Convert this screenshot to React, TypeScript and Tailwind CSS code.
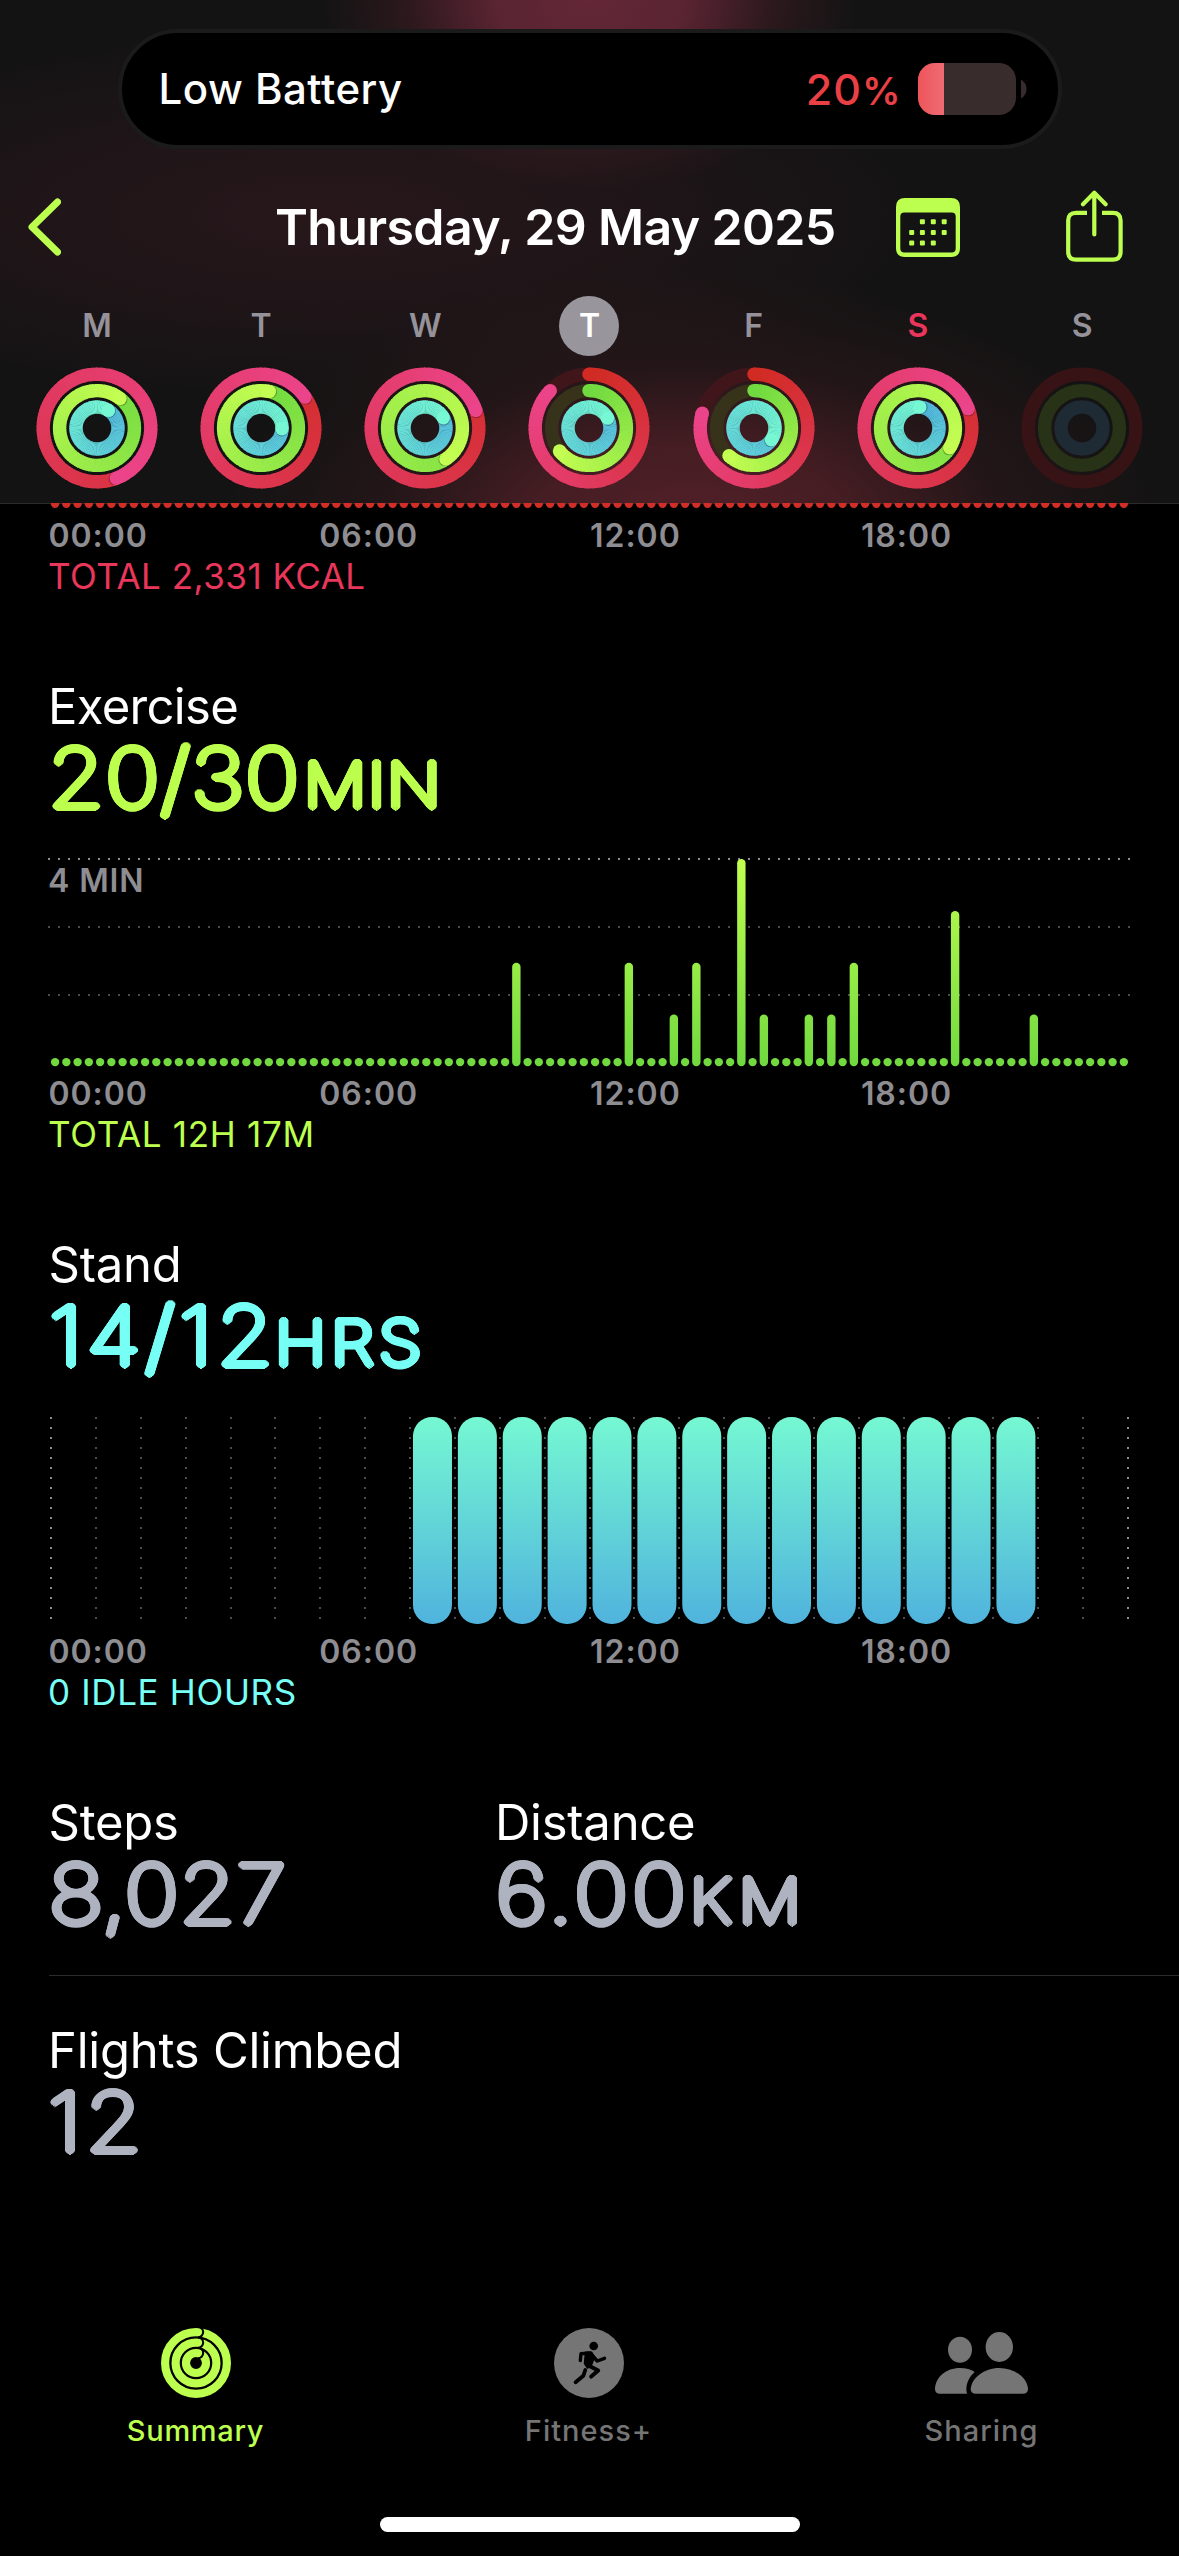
import React from 'react';

type RingData = { move: number; exercise: number; stand: number };
type Day = { letter: string; tone: 'normal' | 'selected' | 'today'; rings: RingData | null };

// Sweep of each ring in degrees, clockwise from the top; above 360 the ring overlaps itself.
const week: Day[] = [
  { letter: 'M', tone: 'normal', rings: { move: 519, exercise: 398, stand: 393 } },
  { letter: 'T', tone: 'normal', rings: { move: 415, exercise: 373, stand: 452 } },
  { letter: 'W', tone: 'normal', rings: { move: 431, exercise: 506, stand: 421 } },
  { letter: 'T', tone: 'selected', rings: { move: 314, exercise: 232, stand: 422 } },
  { letter: 'F', tone: 'normal', rings: { move: 286, exercise: 222, stand: 484 } },
  { letter: 'S', tone: 'today', rings: { move: 429, exercise: 482, stand: 365 } },
  { letter: 'S', tone: 'normal', rings: null },
];

const polar = (r: number, deg: number) => {
  const a = ((deg - 90) * Math.PI) / 180;
  return [r * Math.cos(a), r * Math.sin(a)];
};

const mix = (from: number[], to: number[], t: number) =>
  `rgb(${from.map((v, i) => Math.round(v + (to[i] - v) * t)).join(',')})`;

function Ring({ r, sweep, from, to, track }: { r: number; sweep: number; from: number[]; to: number[]; track: string }) {
  const step = 4;
  const first = Math.max(0, sweep - 360);
  const segments: React.ReactNode[] = [];
  for (let a = first; a < sweep; a += step) {
    const end = Math.min(sweep, a + step + 1);
    const [x1, y1] = polar(r, a);
    const [x2, y2] = polar(r, end);
    segments.push(
      <path key={a} d={`M${x1} ${y1}A${r} ${r} 0 0 1 ${x2} ${y2}`} stroke={mix(from, to, a / sweep)} strokeWidth="13.4" fill="none" />,
    );
  }
  const [tx, ty] = polar(r, sweep);
  const [sx, sy] = polar(r, sweep + 75 / r);
  return (
    <g>
      {sweep < 360 && <circle r={r} stroke={track} strokeWidth="13.4" fill="none" />}
      {sweep < 360 && <circle cx={0} cy={-r} r="6.7" fill={mix(from, to, 0)} />}
      {segments}
      {sweep > 360 && <circle cx={sx} cy={sy} r="6.4" fill="#000" opacity="0.3" />}
      <circle cx={tx} cy={ty} r="6.7" fill={mix(from, to, 1)} />
    </g>
  );
}

function ActivityRings({ rings }: { rings: RingData | null }) {
  return (
    <svg className="mt-[11px] h-[122px] w-[122px]" viewBox="-61 -61 122 122">
      {rings ? (
        <g>
          <Ring r={53.8} sweep={rings.move} from={[209, 43, 36]} to={[236, 68, 139]} track="#40161a" />
          <Ring r={37.4} sweep={rings.exercise} from={[112, 218, 64]} to={[197, 254, 82]} track="#36331a" />
          <Ring r={21} sweep={rings.stand} from={[79, 179, 221]} to={[117, 248, 211]} track="#1e2b35" />
        </g>
      ) : (
        <g fill="none" strokeWidth="13.4">
          <circle r="53.8" stroke="#381316" />
          <circle r="37.4" stroke="#273217" />
          <circle r="21" stroke="#1e2b34" />
        </g>
      )}
    </svg>
  );
}

function DynamicIsland() {
  return (
    <div className="mx-auto mt-[29px] flex h-[120px] w-[944px] items-center rounded-full border-4 border-[#1c1b1c] bg-black pr-[31px] pl-[37px]">
      <span className="text-[42px] leading-none font-medium tracking-[0.5px] text-white">Low Battery</span>
      <span className="ml-auto text-[43px] leading-none font-medium tracking-[1.2px] text-[#ea4045]">
        20<span className="text-[38px] font-semibold tracking-normal">%</span>
      </span>
      <span className="ml-[17px] flex h-[52px] w-[98px] overflow-hidden rounded-[17px] bg-[#382c2c]">
        <span className="h-full w-[26px] bg-linear-to-r from-[#ed5459] to-[#ef6b74]" />
      </span>
      <svg className="ml-1 h-[20px] w-[7px]" viewBox="0 0 7 20">
        <path d="M1 0.5Q6.5 4 6.5 10T1 19.5Z" fill="#382c2c" />
      </svg>
    </div>
  );
}

function TitleBar() {
  return (
    <div className="mt-[30px] flex h-[96px] items-center text-[#bcff4e]">
      <svg className="ml-[28px] h-[58px] w-[33px]" viewBox="0 0 33 58" fill="none" stroke="currentColor" strokeWidth="7" strokeLinecap="round" strokeLinejoin="round">
        <path d="M29.500 4L4 29L29.500 54" />
      </svg>
      <h1 className="ml-[214px] w-[621px] text-[50px] leading-[60px] font-semibold tracking-[-0.64px] whitespace-nowrap text-white">
        Thursday, 29 May 2025
      </h1>
      <svg className="h-[59px] w-[64px]" viewBox="0 0 64 59" fill="currentColor">
        <path fillRule="evenodd" d="M9 0H55Q64 0 64 9V50Q64 59 55 59H9Q0 59 0 50V9Q0 0 9 0ZM8.300 14.500Q4.300 14.500 4.300 18.500V50.500Q4.300 54.500 8.300 54.500H55.700Q59.700 54.500 59.700 50.500V18.500Q59.700 14.500 55.700 14.500Z" />
        {[[26.4, 23.7], [37.3, 23.7], [48.2, 23.7], [15.7, 34.4], [26.4, 34.4], [37.3, 34.4], [48.2, 34.4], [15.7, 45], [26.4, 45], [37.3, 45]].map(([x, y]) => (
          <rect key={`${x}-${y}`} x={x - 2.5} y={y - 2.5} width="5" height="5" rx="1" />
        ))}
      </svg>
      <svg className="mb-[3px] ml-[106px] h-[72px] w-[57px]" viewBox="0 0 57 72" fill="none" stroke="currentColor" strokeWidth="4.2">
        <path d="M21 22.800H10Q2.200 22.800 2.200 30.600V61.800Q2.200 69.600 10 69.600H46.800Q54.600 69.600 54.600 61.800V30.600Q54.600 22.800 46.800 22.800H36" />
        <path d="M28.300 3V44.500M17 14.200L28.300 2.800L39.600 14.200" strokeLinecap="round" strokeLinejoin="round" />
      </svg>
    </div>
  );
}

function WeekStrip() {
  const tone = {
    normal: 'text-[#95929a]',
    selected: 'bg-[#99959c] text-white',
    today: 'text-[#e9365b]',
  };
  return (
    <div className="mt-[21px] grid grid-cols-7 px-[14.8px]">
      {week.map((d, i) => (
        <div key={i} className="flex flex-col items-center">
          <span className={`h-[60px] w-[60px] rounded-full text-center text-[32px] leading-[60px] font-semibold ${tone[d.tone]}`}>{d.letter}</span>
          <ActivityRings rings={d.rings} />
        </div>
      ))}
    </div>
  );
}

function Header() {
  return (
    <header className="h-[503px] overflow-hidden bg-[#131313] bg-[radial-gradient(ellipse_270px_190px_at_590px_0px,#632736_0%,#5a2432_35%,rgba(60,28,36,0.6)_68%,transparent_100%),radial-gradient(ellipse_480px_270px_at_690px_540px,#55202a_0%,#451d23_35%,rgba(48,24,28,0.55)_65%,transparent_100%),radial-gradient(ellipse_620px_190px_at_330px_215px,#27171b_0%,rgba(36,22,26,0.75)_45%,transparent_100%)]">
      <div className="flex flex-col">
        <DynamicIsland />
        <TitleBar />
        <WeekStrip />
      </div>
    </header>
  );
}

function HourLabels({ className }: { className: string }) {
  return (
    <div className={`ml-[48.5px] grid grid-cols-[repeat(4,270.8px)] text-[32px] leading-[40px] font-semibold tracking-[0.95px] text-[#8e8d92] ${className}`}>
      <span>00:00</span>
      <span>06:00</span>
      <span>12:00</span>
      <span>18:00</span>
    </div>
  );
}

// Thin strokes thickened evenly in every direction, which gives the numerals rounded ends.
const rounded =
  'font-thin [text-shadow:3.5px_0_0_currentColor,3.23px_1.34px_0_currentColor,2.47px_2.47px_0_currentColor,1.34px_3.23px_0_currentColor,0_3.5px_0_currentColor,-1.34px_3.23px_0_currentColor,-2.47px_2.47px_0_currentColor,-3.23px_1.34px_0_currentColor,-3.5px_0_0_currentColor,-3.23px_-1.34px_0_currentColor,-2.47px_-2.47px_0_currentColor,-1.34px_-3.23px_0_currentColor,0_-3.5px_0_currentColor,1.34px_-3.23px_0_currentColor,2.47px_-2.47px_0_currentColor,3.23px_-1.34px_0_currentColor,1.8px_0_0_currentColor,-1.8px_0_0_currentColor,0_1.8px_0_currentColor,0_-1.8px_0_currentColor]';

type MetricProps = { title: string; value: string; unit?: string; color: string; titleClass?: string; valueClass: string; unitClass?: string };

function Metric({ title, value, unit, color, titleClass = 'tracking-[-0.25px]', valueClass, unitClass = '' }: MetricProps) {
  return (
    <div>
      <h2 className={`text-[49px] leading-[55px] whitespace-nowrap text-white ${titleClass}`}>{title}</h2>
      <p className={`flex h-[88px] items-baseline whitespace-nowrap ${color} ${rounded}`}>
        <span className={`origin-left scale-x-112 text-[81px] leading-[88px] ${valueClass}`}>{value}</span>
        {unit && <span className={`origin-left scale-x-112 text-[62px] leading-[88px] ${unitClass}`}>{unit}</span>}
      </p>
    </div>
  );
}

const slotX = (i: number) => 55.1 + i * 11.25;
const exercise: Record<number, number> = { 41: 2, 51: 2, 55: 1, 57: 2, 61: 4, 63: 1, 67: 1, 69: 1, 71: 2, 80: 3, 87: 1 };
const slots = Array.from({ length: 96 }, (_, i) => i);

function ExerciseChart() {
  return (
    <div className="relative mt-[36px] h-[209px]">
      <svg className="block h-[209px] w-[1179px]" viewBox="0 858 1179 209">
        <defs>
          <linearGradient id="exercise" gradientUnits="userSpaceOnUse" x1="0" y1="1066" x2="0" y2="859">
            <stop offset="0" stopColor="#70d93f" />
            <stop offset="1" stopColor="#c1ff50" />
          </linearGradient>
        </defs>
        <path d="M48 859H1131" stroke="#8e8d92" strokeWidth="2" strokeDasharray="2 8" />
        <path d="M48 927H1131M48 995H1131" stroke="#4c4c4f" strokeWidth="2" strokeDasharray="2 8" />
        {slots.map((i) => {
          const n = exercise[i] ?? 0;
          const h = n === 0 ? 8.4 : n * 51.8;
          return <rect key={i} x={slotX(i) - 4.2} y={1066.3 - h} width="8.4" height={h} rx="4.2" fill="url(#exercise)" />;
        })}
      </svg>
      <span className="absolute top-[3px] left-[48px] text-[32px] leading-[40px] font-semibold tracking-[0.9px] text-[#8e8d92]">4 MIN</span>
    </div>
  );
}

function StandChart() {
  const lines = Array.from({ length: 25 }, (_, i) => i);
  const stood = Array.from({ length: 14 }, (_, i) => i + 8);
  return (
    <svg className="mt-[36px] block h-[209px] w-[1179px]" viewBox="0 1416 1179 209">
      <defs>
        <linearGradient id="stand" gradientUnits="userSpaceOnUse" x1="0" y1="1417" x2="0" y2="1624">
          <stop offset="0" stopColor="#75f8d2" />
          <stop offset="1" stopColor="#50b3dd" />
        </linearGradient>
      </defs>
      {lines.map((i) => (
        <path key={i} d={`M${Math.round(50 + i * 44.88) + 1} 1417V1620`} stroke={i === 0 || i === 24 ? '#8e8d92' : '#4c4c4f'} strokeWidth="2" strokeDasharray="2 8" />
      ))}
      {stood.map((i) => (
        <rect key={i} x={51 + (i + 0.5) * 44.88 - 19.5} y="1417" width="39" height="207" rx="19" fill="url(#stand)" />
      ))}
    </svg>
  );
}

function Footnote({ children, className }: { children: React.ReactNode; className: string }) {
  return <p className={`ml-[48px] text-[35px] leading-[41px] ${className}`}>{children}</p>;
}

function SummaryIcon() {
  return (
    <svg className="h-[70px] w-[70px]" viewBox="0 0 70 70" fill="none">
      {[30.9, 20.4, 10].map((r) => (
        <g key={r}>
          <circle cx="35" cy="35" r={r} stroke="currentColor" strokeWidth="8.2" />
          <path d={`M37 ${35 - r - 5.2}A5.200 5.200 0 0 1 37 ${35 - r + 5.2}`} stroke="#000" strokeWidth="2" />
        </g>
      ))}
    </svg>
  );
}

function RunnerIcon() {
  return (
    <svg className="h-[70px] w-[70px]" viewBox="0 0 70 70" fill="none">
      <circle cx="35" cy="35" r="35" fill="currentColor" />
      <circle cx="39.700" cy="18" r="4.300" fill="#000" />
      <g stroke="#000" strokeLinecap="round" strokeLinejoin="round" strokeWidth="3.400">
        <path d="M26.300 32.500L27 25.700L36 25L43.300 33L50.500 30.300" />
        <path d="M34.500 37.500L44.200 42.600L37.200 48.600" strokeWidth="4" />
        <path d="M31.300 42L29.300 47.800L21.600 54.300" strokeWidth="3.800" />
      </g>
      <path d="M31.500 24.200H37.500L40.500 29L37.300 37.500L33.500 40L30.500 35.500Z" fill="#000" stroke="#000" strokeWidth="1.500" strokeLinejoin="round" />
    </svg>
  );
}

function PeopleIcon() {
  return (
    <svg className="mt-[1px] h-[69px] w-[93px]" viewBox="0 -3 93 69" fill="currentColor">
      <ellipse cx="25" cy="17.700" rx="12" ry="13" />
      <ellipse cx="64.300" cy="15" rx="13.700" ry="15" />
      <path d="M41 61.700Q35.700 61.700 35.700 57C36.500 46 49 36 64.300 36S92.500 46 93 57Q93 61.700 87.700 61.700Z" />
      <path d="M5 61.700Q0 61.700 0 57C.5 45 11 36 25 36C31 36 36 37.500 39.700 40C33 46 30 54 32 61.700Z" />
    </svg>
  );
}

function Tab({ icon, label, className }: { icon: React.ReactNode; label: string; className: string }) {
  return (
    <div className={`flex flex-1 flex-col items-center ${className}`}>
      {icon}
      <span className="mt-[15px] text-[29px] leading-[36px] font-medium">{label}</span>
    </div>
  );
}

export default function App() {
  return (
    <div className="flex h-[2556px] w-[1179px] flex-col overflow-hidden bg-black font-['Inter',sans-serif]">
      <Header />
      <svg className="block h-[8px] w-[1179px] shrink-0" viewBox="0 503 1179 8">
        <rect x="0" y="503" width="1179" height="1" fill="#2b2b2c" />
        {slots.map((i) => (
          <circle key={i} cx={slotX(i)} cy="503.800" r="4.200" fill="#d22d26" />
        ))}
      </svg>
      <HourLabels className="mt-[5px]" />
      <Footnote className="tracking-[0.5px] text-[#e9365b]">TOTAL 2,331 KCAL</Footnote>

      <section className="mt-[82px]">
        <div className="ml-[48px]">
          <Metric title="Exercise" value="20/30" unit="MIN" color="text-[#bcff4e]" titleClass="tracking-[-0.7px]" valueClass="w-[255.500px] tracking-[1.2px]" unitClass="tracking-[1.6px]" />
        </div>
        <ExerciseChart />
        <HourLabels className="mt-[7px]" />
        <Footnote className="tracking-[0.7px] text-[#bcff4e]">TOTAL 12H 17M</Footnote>
      </section>

      <section className="mt-[82px]">
        <div className="ml-[48.500px]">
          <Metric title="Stand" value="14/12" unit="HRS" color="text-[#77fff5]" valueClass="w-[226.500px] tracking-[4px]" unitClass="tracking-[4.5px]" />
        </div>
        <StandChart />
        <HourLabels className="mt-[7px]" />
        <Footnote className="tracking-[0.65px] text-[#77fff5]">0 IDLE HOURS</Footnote>
      </section>

      <section className="mt-[82px] ml-[48.500px] flex h-[181px] border-b border-[#2c2c2e]">
        <div className="w-[446.500px]">
          <Metric title="Steps" value="8,027" color="text-[#afb3c0]" valueClass="tracking-[0.7px]" />
        </div>
        <Metric title="Distance" value="6.00" unit="KM" color="text-[#afb3c0]" valueClass="ml-[1px] w-[194px] tracking-[3.6px]" unitClass="tracking-[6.5px]" />
      </section>
      <section className="mt-[47px] ml-[48px]">
        <Metric title="Flights Climbed" value="12" color="text-[#afb3c0]" valueClass="tracking-[3.9px]" />
      </section>

      <nav className="mt-[162px] -ml-[1px] flex w-[1179px]">
        <Tab icon={<SummaryIcon />} label="Summary" className="tracking-[0.69px] text-[#bcff4e]" />
        <Tab icon={<RunnerIcon />} label="Fitness+" className="tracking-[1px] text-[#757575]" />
        <Tab icon={<PeopleIcon />} label="Sharing" className="tracking-[1px] text-[#757575]" />
      </nav>
      <div className="mx-auto mt-[68px] h-[15px] w-[420px] shrink-0 rounded-full bg-white" />
    </div>
  );
}
